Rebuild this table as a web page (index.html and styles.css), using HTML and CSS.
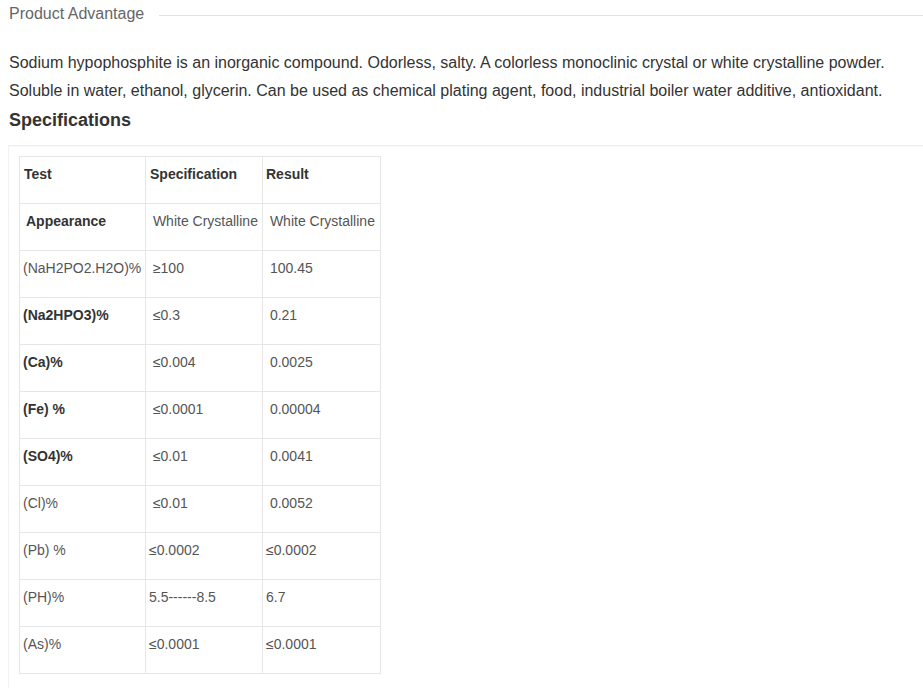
FILE: index.html
```html
<!DOCTYPE html>
<html>
<head>
<meta charset="utf-8">
<link rel="stylesheet" href="styles.css">
</head>
<body>
<div class="page">
  <div class="title"><span class="title-text">Product Advantage</span><span class="title-line"></span></div>
  <p class="desc">Sodium hypophosphite is an inorganic compound. Odorless, salty. A colorless monoclinic crystal or white crystalline powder. Soluble in water, ethanol, glycerin. Can be used as chemical plating agent, food, industrial boiler water additive, antioxidant.</p>
  <h3 class="spec-title">Specifications</h3>
  <div class="box">
    <table class="spec">
      <colgroup><col class="c1"><col class="c2"><col class="c3"></colgroup>
      <tr><td class="b hd">Test</td><td class="b hd">Specification</td><td class="b">Result</td></tr>
      <tr><td class="b ind">Appearance</td><td>&nbsp;White Crystalline</td><td>&nbsp;White Crystalline</td></tr>
      <tr><td>(NaH2PO2.H2O)%</td><td>&nbsp;≥100</td><td>&nbsp;100.45</td></tr>
      <tr><td class="b">(Na2HPO3)%</td><td>&nbsp;≤0.3</td><td>&nbsp;0.21</td></tr>
      <tr><td class="b">(Ca)%</td><td>&nbsp;≤0.004</td><td>&nbsp;0.0025</td></tr>
      <tr><td class="b">(Fe) %</td><td>&nbsp;≤0.0001</td><td>&nbsp;0.00004</td></tr>
      <tr><td class="b">(SO4)%</td><td>&nbsp;≤0.01</td><td>&nbsp;0.0041</td></tr>
      <tr><td>(Cl)%</td><td>&nbsp;≤0.01</td><td>&nbsp;0.0052</td></tr>
      <tr><td>(Pb) %</td><td>≤0.0002</td><td>≤0.0002</td></tr>
      <tr><td>(PH)%</td><td>5.5------8.5</td><td>6.7</td></tr>
      <tr><td>(As)%</td><td>≤0.0001</td><td>≤0.0001</td></tr>
    </table>
  </div>
</div>
</body>
</html>
```
FILE: styles.css
```css
html, body {
  margin: 0;
  padding: 0;
  background: #fff;
}
body {
  font-family: "Liberation Sans", Arial, sans-serif;
  color: #333;
}
.page {
  padding-left: 8px;
}
.title {
  display: flex;
  align-items: center;
  height: 28px;
  padding-left: 1px;
}
.title-text {
  font-size: 16px;
  color: #666;
}
.title-line {
  flex: 1;
  height: 1px;
  background: #e2e2e2;
  margin-left: 15px;
  margin-top: 2px;
}
.desc {
  margin: 21px 0 0 0;
  padding-left: 1px;
  font-size: 16px;
  line-height: 28px;
  color: #333;
}
.spec-title {
  margin: 0;
  padding-left: 1px;
  font-size: 18px;
  line-height: 30px;
  font-weight: bold;
  color: #333;
}
.box {
  margin-top: 10px;
  border-top: 1px solid #efefef;
  border-left: 1px solid #f2f2f2;
  box-shadow: inset 0 1px 1px #f7f7f7;
  padding: 10px 0 14px 10px;
}
.spec {
  border-collapse: collapse;
  table-layout: fixed;
  width: 362px;
  font-size: 14px;
  color: #555;
}
.c1 { width: 126px; }
.c2 { width: 117px; }
.c3 { width: 118px; }
.spec td {
  border: 1px solid #e6e6e6;
  padding: 7px 2px 19px 3px;
  line-height: 20px;
  white-space: nowrap;
  vertical-align: top;
}
.spec td.b {
  font-weight: bold;
  color: #333;
}
.spec td.hd {
  padding-left: 4px;
}
.spec td.ind {
  padding-left: 6px;
}
```
